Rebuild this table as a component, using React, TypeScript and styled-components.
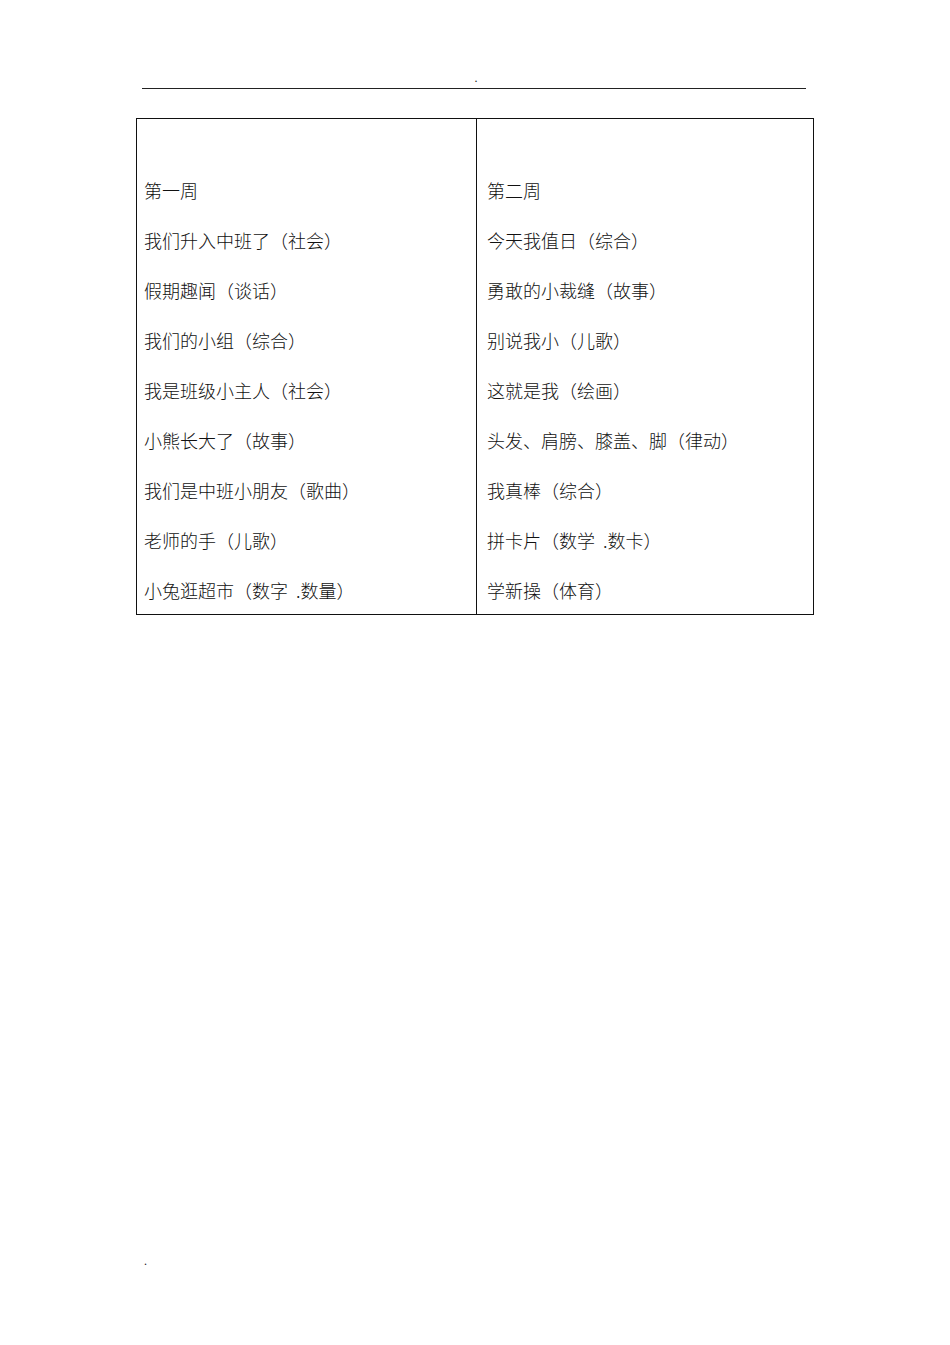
import React from 'react';
import styled, { createGlobalStyle } from 'styled-components';

const GlobalStyle = createGlobalStyle`
    html, body {
        margin: 0;
        padding: 0;
        background: #ffffff;
    }
    body {
        font-family: "Liberation Serif", "Noto Sans CJK SC", serif;
        color: #000;
    }
`;

const weekOne = [
    '第一周',
    '我们升入中班了（社会）',
    '假期趣闻（谈话）',
    '我们的小组（综合）',
    '我是班级小主人（社会）',
    '小熊长大了（故事）',
    '我们是中班小朋友（歌曲）',
    '老师的手（儿歌）',
    '小兔逛超市（数字\u00a0 .数量）',
];

const weekTwo = [
    '第二周',
    '今天我值日（综合）',
    '勇敢的小裁缝（故事）',
    '别说我小（儿歌）',
    '这就是我（绘画）',
    '头发、肩膀、膝盖、脚（律动）',
    '我真棒（综合）',
    '拼卡片（数学\u00a0 .数卡）',
    '学新操（体育）',
];

const App = () => {
    return (
        <>
            <GlobalStyle />
            <Page>
                <Header>
                    <Dot>.</Dot>
                </Header>
                <Table>
                    <Column>
                        {weekOne.map((item) => (
                            <Item key={item}>{item}</Item>
                        ))}
                    </Column>
                    <Column right>
                        {weekTwo.map((item) => (
                            <Item key={item}>{item}</Item>
                        ))}
                    </Column>
                </Table>
                <Footer>
                    <Dot>.</Dot>
                </Footer>
            </Page>
        </>
    );
};

const Page = styled.div`
    width: 950px;
    height: 1345px;
    box-sizing: border-box;
    padding-top: 70px;
`;

const Header = styled.header`
    margin: 0 144px 0 142px;
    height: 19px;
    box-sizing: border-box;
    padding: 2px 0 0 4px;
    border-bottom: 1px solid #222;
    display: flex;
    justify-content: center;
    align-items: flex-start;
`;

const Dot = styled.span`
    font-family: "Liberation Serif", serif;
    font-size: 12px;
    line-height: 12px;
    color: #222;
`;

const Table = styled.div`
    margin: 29px 0 0 136px;
    width: 678px;
    height: 497px;
    box-sizing: border-box;
    border: 1px solid #111;
    display: grid;
    grid-template-columns: 339px 1fr;
`;

const Column = styled.div<{ right?: boolean }>`
    display: flex;
    flex-direction: column;
    gap: 30px;
    padding: 61px 0 0 ${(p) => (p.right ? '10px' : '7px')};
    border-left: ${(p) => (p.right ? '1px solid #111' : 'none')};
`;

const Item = styled.div`
    font-family: "Noto Sans CJK SC", sans-serif;
    font-size: 18px;
    font-weight: 300;
    line-height: 20px;
    height: 20px;
    white-space: nowrap;
    color: #111;
`;

const Footer = styled.footer`
    margin: 636px 0 0 144px;
`;

export default App;
